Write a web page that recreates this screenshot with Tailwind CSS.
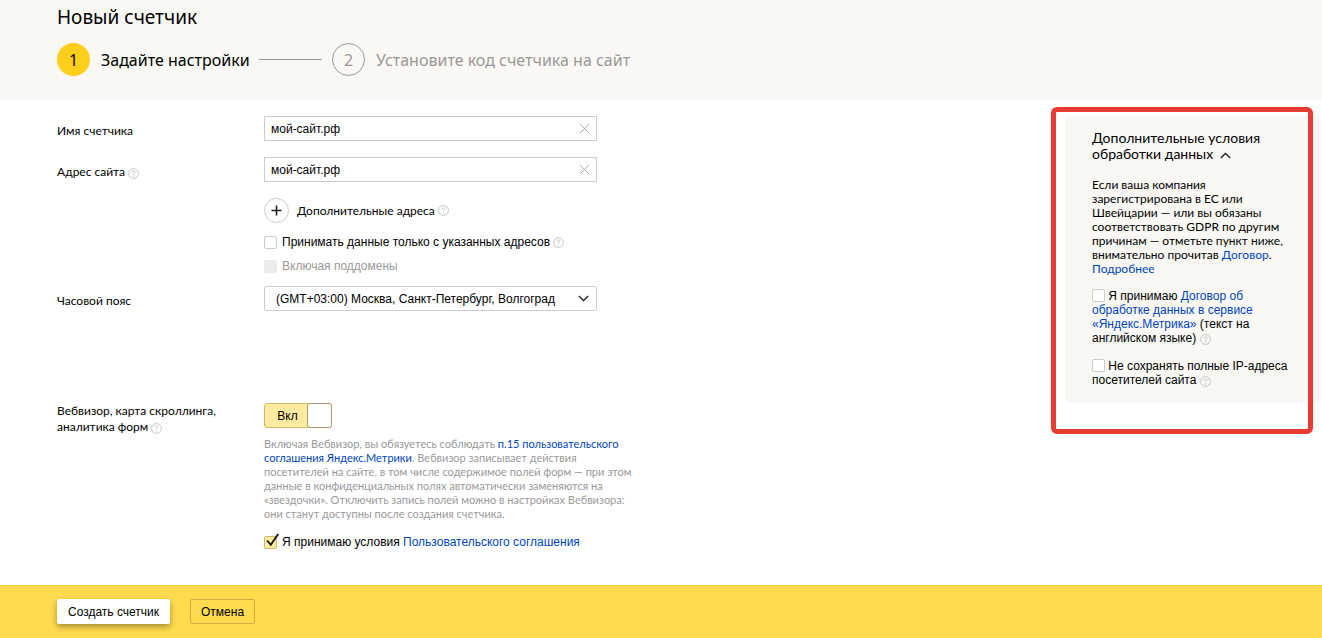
<!DOCTYPE html>
<html lang="ru">
<head>
<meta charset="utf-8">
<meta name="viewport" content="width=device-width, initial-scale=1">
<title>Новый счетчик</title>
<script src="https://cdn.jsdelivr.net/npm/@tailwindcss/browser@4"></script>
</head>
<body class="flex min-h-screen flex-col bg-white font-['Lato','Noto_Sans',sans-serif] text-[12px] leading-4 text-black">
<svg class="hidden" aria-hidden="true">
  <symbol id="help" viewBox="0 0 11 11">
    <circle cx="5.5" cy="5.5" r="4.9" fill="none" stroke="#c4c4c4"/>
    <path d="M4 4.4C4 3.4 4.6 2.9 5.5 2.9S7 3.5 7 4.2C7 5.200 5.500 5.200 5.500 6.500M5.500 7.500V8.500" fill="none" stroke="#bbb" stroke-width=".9"/>
  </symbol>
</svg>

<header class="h-[100px] bg-[#f9f8f5] pt-[5px] pl-[57px] font-['Noto_Sans','Open_Sans',sans-serif]">
  <h1 class="text-[19px] leading-6">Новый счетчик</h1>
  <ol class="mt-[14px] flex items-center text-[16px] leading-6">
    <li class="flex items-center">
      <span class="flex size-[33px] items-center justify-center rounded-full bg-[#ffce1a]">1</span>
      <span class="ml-[11px] w-[148px] whitespace-nowrap">Задайте настройки</span>
    </li>
    <li class="mx-[10px] h-px w-[63px] bg-[#999]" aria-hidden="true"></li>
    <li class="flex items-center text-[#999]">
      <span class="flex size-[33px] items-center justify-center rounded-full border border-[#999]">2</span>
      <span class="ml-[11px] whitespace-nowrap">Установите код счетчика на сайт</span>
    </li>
  </ol>
</header>

<main class="flex flex-1 items-start justify-between pt-4">
  <form id="counter" class="grid grid-cols-[207px_380px] pl-[57px]">
    <label for="name" class="pt-[7px]">Имя счетчика</label>
    <div class="mb-4 flex h-[25px] w-[333px] items-center border border-[#ccc] pr-[6px]">
      <input id="name" type="text" value="мой-сайт.рф" class="min-w-0 flex-1 pl-[6px] font-['Liberation_Sans',sans-serif] outline-none">
      <button type="button" aria-label="Очистить имя"><svg class="size-[11px]" viewBox="0 0 11 11" fill="none" stroke="#aaa"><path d="M1 1l9 9M10 1l-9 9"/></svg></button>
    </div>

    <div class="pt-[7px]"><label for="site">Адрес сайта</label> <button type="button" aria-label="Справка" class="align-[-3px]"><svg class="size-[11px]"><use href="#help"/></svg></button></div>
    <div class="mb-4 flex h-[25px] w-[333px] items-center border border-[#ccc] pr-[6px]">
      <input id="site" type="text" value="мой-сайт.рф" class="min-w-0 flex-1 pl-[6px] font-['Liberation_Sans',sans-serif] outline-none">
      <button type="button" aria-label="Очистить адрес"><svg class="size-[11px]" viewBox="0 0 11 11" fill="none" stroke="#aaa"><path d="M1 1l9 9M10 1l-9 9"/></svg></button>
    </div>

    <div class="col-start-2">
      <div class="flex items-center">
        <button type="button" aria-labelledby="extra" class="flex size-[25px] items-center justify-center rounded-full border border-[#ccc]"><svg class="size-[11px]" viewBox="0 0 11 11" stroke="#222" stroke-width="1.6"><path d="M5.5 0.500v10M0.500 5.500h10"/></svg></button>
        <span id="extra" class="ml-2">Дополнительные адреса</span>
        <button type="button" aria-label="Справка" class="ml-[3px]"><svg class="size-[11px]"><use href="#help"/></svg></button>
      </div>
      <div class="mt-[11px] flex h-4 items-center font-['Liberation_Sans',sans-serif]">
        <input id="only" type="checkbox" class="size-[13px] appearance-none rounded-[2px] border border-[#ccc] bg-white">
        <label for="only" class="ml-[5px]">Принимать данные только с указанных адресов</label>
        <button type="button" aria-label="Справка" class="ml-[3px]"><svg class="size-[11px]"><use href="#help"/></svg></button>
      </div>
      <div class="mt-2 flex h-4 items-center font-['Liberation_Sans',sans-serif] text-[#999]">
        <input id="sub" type="checkbox" disabled class="size-[13px] appearance-none rounded-[2px] bg-[#ebebeb]">
        <label for="sub" class="ml-[5px]">Включая поддомены</label>
      </div>
    </div>

    <label for="tz" class="mt-3 pt-[7px]">Часовой пояс</label>
    <div class="relative mt-3 mb-[92px] w-[333px]">
      <select id="tz" class="h-[25px] w-full appearance-none rounded-[2px] border border-[#ccc] bg-white pl-[11px] font-['Liberation_Sans',sans-serif]">
        <option>(GMT+03:00) Москва, Санкт-Петербург, Волгоград</option>
      </select>
      <svg class="pointer-events-none absolute top-[9px] right-2 h-[7px] w-[11px]" viewBox="0 0 11 7" fill="none" stroke="#222" stroke-width="1.3"><path d="M.8 1l4.700 4.500L10.200 1"/></svg>
    </div>

    <div class="whitespace-nowrap"><span id="wv">Вебвизор, карта скроллинга,<br>аналитика форм</span> <button type="button" aria-label="Справка" class="align-[-3px]"><svg class="size-[11px]"><use href="#help"/></svg></button></div>
    <div>
      <button type="button" role="switch" aria-checked="true" aria-labelledby="wv" class="flex h-[25px] w-[68px] rounded-[3px] border border-[#ccb96f] bg-[#ffeba0] font-['Liberation_Sans',sans-serif] leading-[24px]">
        <span class="flex-1 pl-[3px]">Вкл</span><span class="-my-px -mr-px h-[25px] w-[25px] rounded-[3px] border border-[#a89a6a] bg-white"></span>
      </button>
      <p class="mt-[9px] text-[11px] leading-[14px] whitespace-nowrap text-[#999]">Включая Вебвизор, вы обязуетесь соблюдать <a href="#" class="text-[#04b]">п.15 пользовательского<br>соглашения Яндекс.Метрики</a>. Вебвизор записывает действия<br>посетителей на сайте, в том числе содержимое полей форм — при этом<br>данные в конфиденциальных полях автоматически заменяются на<br>«звездочки». Отключить запись полей можно в настройках Вебвизора:<br>они станут доступны после создания счетчика.</p>
      <div class="mt-[13px] flex h-4 items-center font-['Liberation_Sans',sans-serif]">
        <span class="relative flex">
          <input id="agree" type="checkbox" checked class="size-[13px] appearance-none rounded-[2px] border border-[#c9b672] bg-[#ffeba0]">
          <svg class="pointer-events-none absolute -top-[3px] left-0 size-[16px]" viewBox="0 0 16 16" fill="none" stroke="#111" stroke-width="1.8"><path d="M3 7.500l3.800 4.300L14.200 1"/></svg>
        </span>
        <label for="agree" class="ml-[5px] whitespace-nowrap">Я принимаю условия <a href="#" class="text-[#04b]">Пользовательского соглашения</a></label>
      </div>
    </div>
  </form>

  <aside class="relative mr-px w-64 rounded-[4px] bg-[#f9f8f5] pt-[14px] pr-4 pb-4 pl-[27px] leading-[14px] whitespace-nowrap">
    <h2 class="text-[14px] leading-4">Дополнительные условия<br>обработки данных <button type="button" aria-label="Свернуть" class="ml-[3px]"><svg class="h-[7px] w-[11px]" viewBox="0 0 11 7" fill="none" stroke="#222" stroke-width="1.4"><path d="M.8 6l4.700-4.500L10.200 6"/></svg></button></h2>
    <p class="mt-[16px]">Если ваша компания<br>зарегистрирована в ЕС или<br>Швейцарии — или вы обязаны<br>соответствовать GDPR по другим<br>причинам — отметьте пункт ниже,<br>внимательно прочитав <a href="#" class="text-[#04b]">Договор</a>.<br><a href="#" class="text-[#04b]">Подробнее</a></p>
    <div class="mt-[13px] font-['Liberation_Sans',sans-serif]">
      <input id="dpa" type="checkbox" class="size-[13px] appearance-none rounded-[2px] border border-[#ccc] bg-white align-[-2px]">
      <label for="dpa">Я принимаю <a href="#" class="text-[#04b]">Договор об<br>обработке данных в сервисе<br>«Яндекс.Метрика»</a> (текст на<br>английском языке)</label> <button type="button" aria-label="Справка" class="h-[11px] align-[-3px]"><svg class="size-[11px]"><use href="#help"/></svg></button>
    </div>
    <div class="mt-[14px] font-['Liberation_Sans',sans-serif]">
      <input id="ip" type="checkbox" class="size-[13px] appearance-none rounded-[2px] border border-[#ccc] bg-white align-[-2px]">
      <label for="ip">Не сохранять полные IP-адреса<br>посетителей сайта</label> <button type="button" aria-label="Справка" class="h-[11px] align-[-3px]"><svg class="size-[11px]"><use href="#help"/></svg></button>
    </div>
    <div class="pointer-events-none absolute -top-[9px] right-2 -bottom-[31px] -left-[14px] rounded-[6px] border-[5px] border-[#e63c32]"></div>
  </aside>
</main>

<footer class="flex h-[53px] items-start gap-5 border-t border-[#f0cf4c] bg-[#ffdb4d] pt-[13px] pl-[57px] font-['Liberation_Sans',sans-serif]">
  <button type="submit" form="counter" class="h-[25px] rounded-[2px] bg-white px-[11px] shadow-[0_3px_6px_rgba(0,0,0,0.35)]">Создать счетчик</button>
  <button type="button" class="h-[25px] rounded-[2px] border border-[#ccaf3d] px-[10px]">Отмена</button>
</footer>
</body>
</html>
